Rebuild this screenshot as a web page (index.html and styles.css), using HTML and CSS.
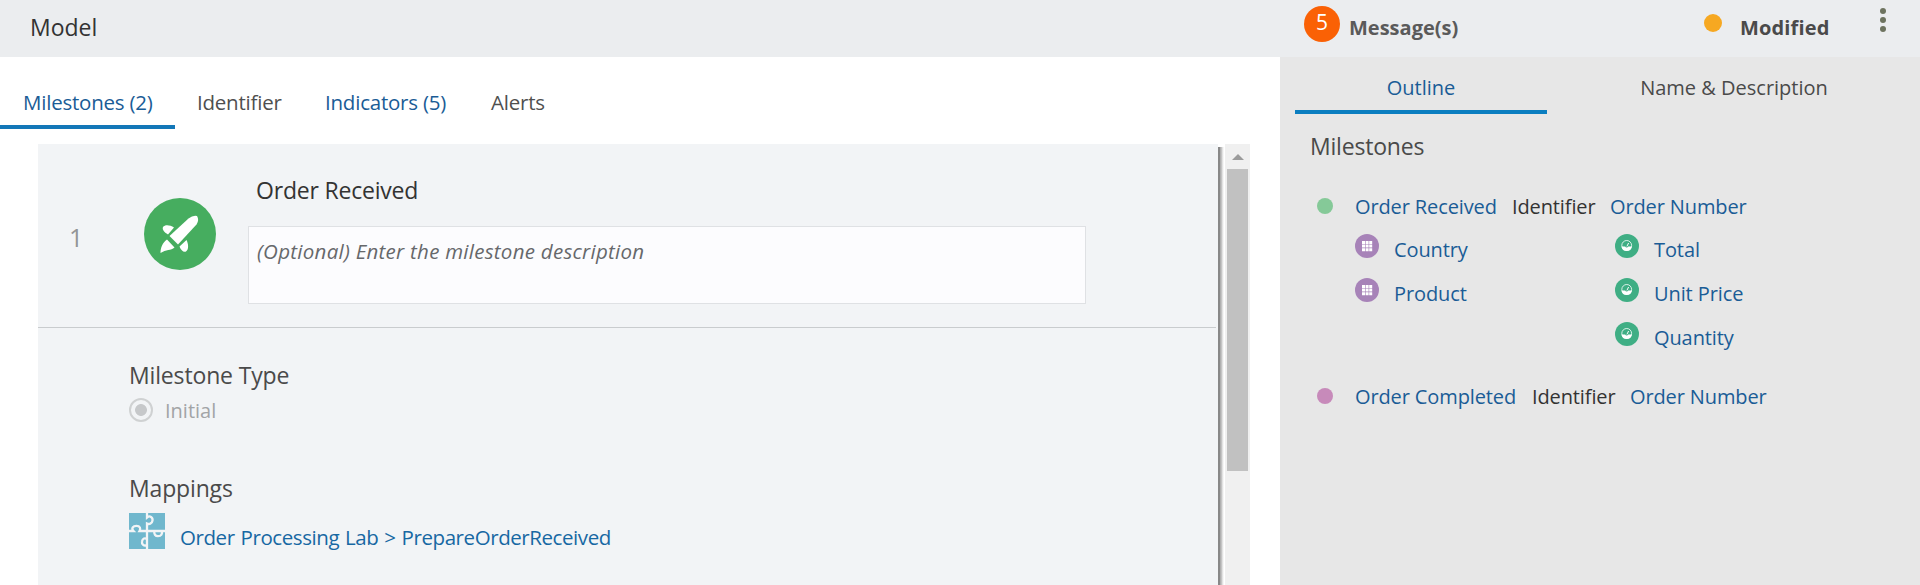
FILE: index.html
```html
<!DOCTYPE html>
<html lang="en">
<head>
<meta charset="utf-8">
<title>Model</title>
<link rel="stylesheet" href="styles.css">
</head>
<body>
<svg class="defs" aria-hidden="true">
  <symbol id="grid" viewBox="0 0 24 24">
    <circle cx="12" cy="12" r="12" fill="#a783b8"/>
    <path fill="#fff" d="M7 7h3v3H7zM10.600 7h3v3h-3zM14.200 7h3v3h-3zM7 10.600h3v3H7zM10.600 10.600h3v3h-3zM14.200 10.600h3v3h-3zM7 14.200h3v3H7zM10.600 14.200h3v3h-3zM14.200 14.200h3v3h-3z"/>
  </symbol>
  <symbol id="gauge" viewBox="0 0 24 24">
    <circle cx="12" cy="12" r="12" fill="#3fae84"/>
    <circle cx="11.700" cy="11.400" r="4.900" fill="none" stroke="#fff" stroke-width="0.800"/>
    <path fill="#fff" d="M6.500 12.400h3.700q.4 1 1.500 1t1.500-1h3.700a5.250 5.250 0 0 1-10.400 0z"/>
    <path d="M11.900 12.400L13.600 9" stroke="#fff" stroke-width="1"/>
  </symbol>
</svg>
<div class="app">
  <main class="main">
    <header class="bar"><h1 class="title">Model</h1></header>
    <nav class="tabs">
      <a class="tab tab-milestones active">Milestones (2)</a>
      <a class="tab tab-identifier">Identifier</a>
      <a class="tab tab-indicators blue">Indicators (5)</a>
      <a class="tab tab-alerts">Alerts</a>
    </nav>
    <div class="scroller">
      <section class="card">
        <div class="card-head">
          <span class="number">1</span>
          <svg class="rocket" viewBox="0 0 72 72">
            <circle cx="36" cy="36" r="36" fill="#46ad5f"/>
            <path fill="#fff" d="M25.500 38L44.500 20.500Q49 17 53 18Q55.500 22 52.500 26.500L34 46.500z"/>
            <path fill="#fff" d="M24 36.500C20 34 18 31.500 19 29C21 26.500 26 27 30 29.500zM35.500 48.500C37 52.500 39.500 54.500 42 53.500C45 51.500 44.500 46 42.500 42zM23 41.500L30.500 49.500C27 52.500 22 51.500 16.500 55C16.500 50 18.500 44.500 23 41.500z"/>
          </svg>
          <div class="fields">
            <h2 class="name">Order Received</h2>
            <div class="desc">(Optional) Enter the milestone description</div>
          </div>
        </div>
        <div class="card-body">
          <h3 class="label l-type">Milestone Type</h3>
          <div class="radio-row"><span class="radio"></span><span class="radio-text">Initial</span></div>
          <h3 class="label l-map">Mappings</h3>
          <div class="map-row">
            <svg class="puzzle" viewBox="0 0 36 36">
              <rect width="36" height="36" fill="#70b7cd"/>
              <g fill="none" stroke="#f2f4f6" stroke-width="2.300">
                <path d="M18 0V4.500C21 2 24 4.500 23.500 7.500C23 11 20 11.500 18 10.500V36"/>
                <path d="M18 32C15 34 12.500 31 13 28.500C13.500 25.500 16 24.500 18 26"/>
                <path d="M0 18H4.500C2 15.500 4 12.800 7.500 12.800C11 12.800 12 15.500 10.500 18H36"/>
                <path d="M25.500 18C24.500 21 26.500 23.200 29 23.200C32 23.200 34 20.500 32.500 18"/>
              </g>
            </svg>
            <a class="map-link">Order Processing Lab &gt; PrepareOrderReceived</a>
          </div>
        </div>
      </section>
      <div class="edge"></div>
      <div class="track"><svg class="arrow" viewBox="0 0 12 6"><path d="M0 6L6 0L12 6z" fill="#9b9b9b"/></svg><div class="thumb"></div></div>
    </div>
  </main>
  <aside class="side">
    <header class="bar status">
      <span class="badge">5</span>
      <span class="messages">Message(s)</span>
      <span class="state-dot"></span>
      <span class="state">Modified</span>
      <svg class="kebab" viewBox="0 0 6 24"><g fill="#6d735f"><circle cx="3" cy="3" r="3"/><circle cx="3" cy="12" r="3"/><circle cx="3" cy="21" r="3"/></g></svg>
    </header>
    <nav class="side-tabs">
      <a class="side-tab on">Outline</a>
      <a class="side-tab off">Name &amp; Description</a>
    </nav>
    <h2 class="side-title">Milestones</h2>
    <div class="line"><span class="dot green"></span><a class="o-rec">Order Received</a><span class="o-id">Identifier</span><a>Order Number</a></div>
    <div class="items">
      <div class="col">
        <div class="item"><svg class="ic"><use href="#grid"/></svg><a>Country</a></div>
        <div class="item"><svg class="ic"><use href="#grid"/></svg><a>Product</a></div>
      </div>
      <div class="col">
        <div class="item"><svg class="ic"><use href="#gauge"/></svg><a>Total</a></div>
        <div class="item"><svg class="ic"><use href="#gauge"/></svg><a>Unit Price</a></div>
        <div class="item"><svg class="ic"><use href="#gauge"/></svg><a>Quantity</a></div>
      </div>
    </div>
    <div class="line second"><span class="dot pink"></span><a class="o-comp">Order Completed</a><span class="o-id">Identifier</span><a>Order Number</a></div>
  </aside>
</div>
</body>
</html>
```
FILE: styles.css
```css
* { box-sizing: border-box; }
body { margin: 0; font-family: "Open Sans", "Noto Sans", sans-serif; font-size: 20px; color: #4a4a4a; background: #fff; }
h1, h2, h3 { margin: 0; font-weight: 400; }
a { white-space: nowrap; }
.defs { position: absolute; width: 0; height: 0; }
.app { display: flex; width: 1920px; height: 585px; overflow: hidden; }
.main { width: 1280px; display: flex; flex-direction: column; }
.bar { height: 57px; background: #ebedef; flex: none; }
.title { padding: 7px 0 0 30px; font-size: 23px; line-height: 40px; color: #333; }
.tabs { display: flex; height: 72px; flex: none; font-size: 20.5px; line-height: 40px; letter-spacing: -0.22px; }
.tab { padding-top: 25px; height: 72px; color: #4f4f4f; }
.tab-milestones { width: 175px; padding-left: 23px; }
.tab-identifier { width: 150px; padding-left: 22px; }
.tab-indicators { width: 166px; }
.tab.blue, .tab.active { color: #1a5c96; }
.active { border-bottom: 4px solid #1377b8; }
.scroller { display: flex; margin: 15px 0 0 38px; height: 441px; }
.card { width: 1180px; background: #f2f4f6; }
.card-head { display: flex; width: 1178px; height: 184px; border-bottom: 1px solid #c9ccce; }
.number { width: 106px; padding: 73px 0 0 31px; font-size: 25px; line-height: 40px; color: #939597; }
.rocket { width: 72px; height: 72px; margin-top: 54px; }
.fields { margin-left: 32px; }
.name { padding: 26px 0 0 8px; height: 82px; font-size: 23px; line-height: 40px; color: #333; letter-spacing: -0.2px; }
.desc { width: 838px; height: 78px; border: 1px solid #dfe1e4; background: #fcfcfe; padding: 4px 0 0 8px; font-size: 20.5px; line-height: 40px; font-style: italic; color: #66686b; letter-spacing: 0.27px; }
.card-body { padding-left: 91px; }
.label { font-size: 23px; line-height: 40px; letter-spacing: -0.15px; }
.l-type { margin-top: 27px; }
.radio-row { display: flex; height: 24px; margin-top: 3px; }
.radio { width: 24px; height: 24px; border: 2px solid #cfd1d2; border-radius: 50%; background: radial-gradient(circle, #c6c8ca 5.500px, transparent 6.300px); }
.radio-text { margin-left: 12px; line-height: 26px; color: #a2a4a6; }
.l-map { margin-top: 46px; }
.map-row { display: flex; margin-top: 5px; }
.puzzle { width: 36px; height: 36px; }
.map-link { margin-left: 15px; padding-top: 4px; line-height: 40px; color: #1768a3; font-size: 20.5px; letter-spacing: -0.42px; word-spacing: 1px; }
.edge { width: 7px; margin-top: 3px; background: linear-gradient(90deg, #888 0 2px, #b0b0b0 2px 3px, #d8d8d8 4px, #fff 6px); }
.track { width: 25px; background: #f0f0f0; display: flex; flex-direction: column; align-items: center; }
.arrow { width: 12px; height: 6px; margin: 10px 0 9px; flex: none; }
.thumb { width: 21px; height: 302px; background: #c1c1c1; }
.side { width: 640px; background: #e7e7e7; }
.status { display: flex; font-weight: 700; line-height: 40px; }
.badge { width: 36px; height: 36px; margin: 6px 0 0 24px; border-radius: 50%; background: #fa6105; color: #fff; text-align: center; font-weight: 400; line-height: 32px; font-size: 21px; }
.messages { margin: 8px 0 0 9px; width: 355px; color: #5a5a5a; }
.state-dot { width: 18px; height: 18px; margin-top: 14px; border-radius: 50%; background: #f6a821; }
.state { margin: 8px 0 0 18px; width: 140px; letter-spacing: 0.15px; }
.kebab { width: 6px; height: 24px; margin-top: 8px; }
.side-tabs { display: flex; height: 57px; margin-left: 15px; }
.side-tab { width: 252px; height: 57px; padding-top: 11px; line-height: 40px; text-align: center; }
.on { color: #1a5c96; border-bottom: 4px solid #0b7ec0; }
.off { width: 373px; padding-left: 1px; }
.side-title { padding: 12px 0 0 30px; font-size: 23px; line-height: 40px; letter-spacing: -0.2px; }
.line { display: flex; height: 44px; margin-top: 21px; padding-left: 37px; line-height: 40px; color: #333; letter-spacing: -0.12px; }
.line a, .item a { color: #1a5c96; }
.dot { width: 16px; height: 16px; margin: 11px 22px 0 0; border-radius: 50%; }
.green { background: #85c998; }
.pink { background: #c78aba; }
.o-rec { width: 157px; }
.o-comp { width: 177px; }
.o-id { width: 98px; }
.items { display: flex; padding-left: 75px; height: 132px; margin-top: 3px; }
.col { width: 260px; }
.item { display: flex; height: 44px; }
.item a { padding-left: 15px; line-height: 32px; letter-spacing: -0.1px; }
.ic { width: 24px; height: 24px; }
.second { margin-top: 11px; }
```
